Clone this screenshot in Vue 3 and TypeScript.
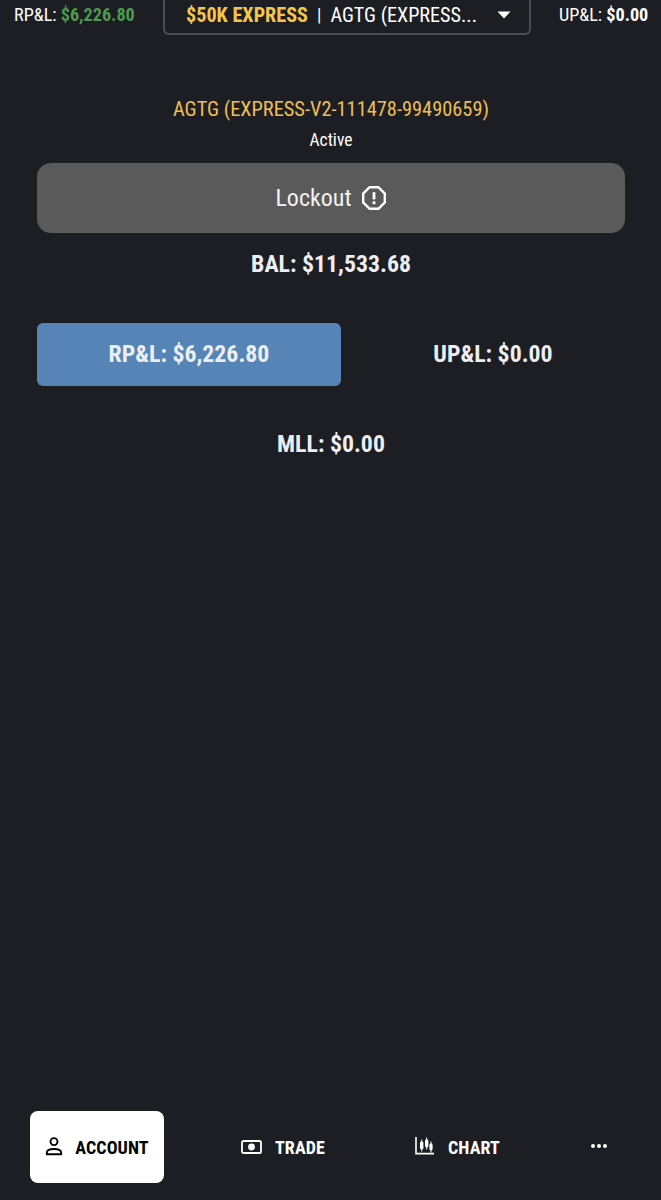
<script setup lang="ts">
const tabs = ['TRADE', 'CHART']
</script>

<template>
  <div class="page">
    <header class="top">
      <div class="stat rp">RP&amp;L: <b class="green">$6,226.80</b></div>
      <div class="select">
        <b class="gold">$50K EXPRESS</b><span class="sep">|</span><span class="acct">AGTG (EXPRESS...</span>
        <svg class="caret" width="14" height="8" viewBox="0 0 14 8"><path d="M0.5 0.5h13L7 7.5z" fill="#fff" /></svg>
      </div>
      <div class="stat up">UP&amp;L: <b>$0.00</b></div>
    </header>

    <main class="main">
      <div class="name">AGTG (EXPRESS-V2-111478-99490659)</div>
      <div class="status">Active</div>
      <div class="lockout">
        <span>Lockout</span>
        <svg width="26" height="26" viewBox="0 0 26 26" fill="none" stroke="#fff" stroke-width="2.4">
          <path d="M8.6 2.2h8.8l6.4 6.4v8.8l-6.4 6.4H8.6l-6.4-6.4V8.6z" />
          <path d="M13 7.2v7.2" stroke-width="2.8" />
          <path d="M13 16.4v2.8" stroke-width="2.8" />
        </svg>
      </div>
      <div class="bal">BAL: $11,533.68</div>
      <div class="pnl">
        <div class="pnl-btn active">RP&amp;L: $6,226.80</div>
        <div class="pnl-btn second">UP&amp;L: $0.00</div>
      </div>
      <div class="mll">MLL: $0.00</div>
    </main>

    <nav class="nav">
      <div class="tab current">
        <svg width="18" height="20" viewBox="0 0 18 20" fill="none" stroke="#000" stroke-width="1.9">
          <circle cx="9" cy="4.6" r="3.5" />
          <path d="M1.8 17.2v-1.4c0-2.6 3.4-3.8 7.2-3.8s7.2 1.2 7.2 3.8v1.4z" stroke-linejoin="round" />
        </svg>
        <span>ACCOUNT</span>
      </div>
      <div class="tab trade">
        <svg width="21" height="14" viewBox="0 0 21 14" fill="none" stroke="#fff" stroke-width="1.8">
          <rect x="1" y="1" width="19" height="12" rx="1.6" />
          <circle cx="10.5" cy="7" r="3.4" fill="#fff" stroke="none" />
        </svg>
        <span>{{ tabs[0] }}</span>
      </div>
      <div class="tab chart">
        <svg class="chart-icon" width="20" height="18" viewBox="0 0 20 18" fill="none" stroke="#fff">
          <path d="M1 0V16.6H19" stroke-width="1.6" />
          <path d="M6.7 2.5v12M11.7 0.5v12M16 4.5v11" stroke-width="1" />
          <rect x="5" y="4.5" width="3.4" height="8" rx="1.4" fill="#fff" stroke="none" />
          <rect x="10" y="2.5" width="3.4" height="8" rx="1.4" fill="#fff" stroke="none" />
          <rect x="14.4" y="6.5" width="3.2" height="7" rx="1.4" fill="#fff" stroke="none" />
        </svg>
        <span>{{ tabs[1] }}</span>
      </div>
      <div class="more"><i></i><i></i><i></i></div>
    </nav>
  </div>
</template>

<style>
body { margin: 0; background: #1d1e23; }
</style>

<style scoped>
.page {
  width: 661px;
  height: 1200px;
  background: #1d1e23;
  color: #fff;
  display: flex;
  flex-direction: column;
  overflow: hidden;
  font-family: Roboto, "Liberation Sans", sans-serif;
  font-stretch: 75%;
}
.top {
  height: 36px;
  display: flex;
  align-items: flex-start;
  flex: none;
}
.stat { font-size: 18.2px; line-height: 30px; white-space: nowrap; }
.stat b { font-weight: 700; }
.rp { margin-left: 14px; width: 149px; }
.green { color: #4d9a4f; }
.up { margin-left: 28px; }
.select {
  width: 368px;
  height: 35px;
  box-sizing: border-box;
  border: 2px solid #4c4d52;
  border-top: none;
  border-radius: 0 0 6px 6px;
  display: flex;
  align-items: center;
  padding: 0 18px 4px 21px;
  font-size: 20.2px;
  white-space: nowrap;
}
.gold { color: #f5c64b; font-weight: 700; }
.sep { margin: 0 9px; font-size: 18px; }
.caret { margin-left: auto; }
.main {
  flex: 1;
  display: flex;
  flex-direction: column;
  align-items: center;
  padding: 59px 36px 0 37px;
}
.name { color: #edbf56; font-size: 20.4px; line-height: 28px; }
.status { font-size: 17.5px; line-height: 24px; margin-top: 5px; }
.lockout {
  margin-top: 11px;
  width: 100%;
  height: 70px;
  background: #5a5a5a;
  border-radius: 14px;
  display: flex;
  align-items: center;
  justify-content: center;
  gap: 9px;
  font-size: 24px;
  color: #f2f2f2;
}
.bal { margin-top: 16px; font-size: 23.8px; line-height: 30px; font-weight: 700; color: #eceef2; }
.pnl { margin-top: 44px; width: 100%; display: flex; }
.pnl-btn {
  flex: 1;
  height: 63px;
  padding-bottom: 1px;
  box-sizing: border-box;
  border-radius: 6px;
  display: flex;
  align-items: center;
  justify-content: center;
  font-size: 23.8px;
  font-weight: 700;
  color: #eceef2;
}
.pnl-btn.second { padding-left: 20px; }
.pnl-btn.active { background: #5684b6; flex: none; width: 304px; }
.mll { margin-top: 43px; font-size: 23.8px; line-height: 30px; font-weight: 700; color: #eceef2; }
.nav {
  flex: none;
  height: 89px;
  display: flex;
  align-items: flex-start;
  padding-left: 30px;
}
.tab {
  display: flex;
  align-items: center;
  gap: 13px;
  height: 72px;
  font-size: 18px;
  font-weight: 700;
  letter-spacing: 0.1px;
}
.current {
  width: 134px;
  box-sizing: border-box;
  justify-content: center;
  background: #fff;
  color: #000;
  border-radius: 8px;
  gap: 12px;
}
.trade { margin-left: 77px; }
.chart { margin-left: 90px; }
.chart-icon { margin-top: -3px; }
.more { display: flex; gap: 2px; margin-left: 91px; height: 70px; align-items: center; }
.more i { width: 4px; height: 4px; border-radius: 50%; background: #fff; display: block; }
</style>
